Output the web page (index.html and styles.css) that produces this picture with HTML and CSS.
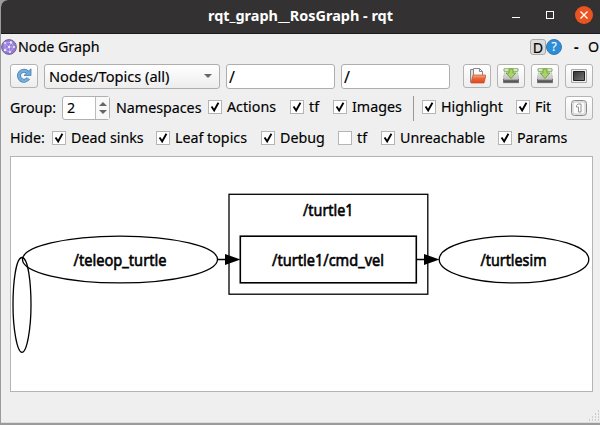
FILE: index.html
```html
<!DOCTYPE html>
<html lang="en">
<head>
<meta charset="utf-8">
<title>rqt_graph__RosGraph - rqt</title>
<link rel="stylesheet" href="styles.css">
</head>
<body>
<svg class="defs" width="0" height="0">
  <defs>
    <linearGradient id="folder" x2="0" y2="1"><stop stop-color="#f6ad86"/><stop offset=".45" stop-color="#e96534"/><stop offset="1" stop-color="#dd4a20"/></linearGradient>
    <linearGradient id="screen" x2="1" y2="1"><stop stop-color="#333"/><stop offset="1" stop-color="#777"/></linearGradient>
    <linearGradient id="drive" x2="0" y2="1"><stop stop-color="#eee"/><stop offset="1" stop-color="#aaa"/></linearGradient>
    <symbol id="save" viewBox="0 0 16 16">
      <path d="M2 3h12l2 8v4H0v-4z" fill="url(#drive)" stroke="#aaa" stroke-width=".5"/>
      <path d="M.3 11h15.4v3.7H.3z" fill="#555"/><path d="M1 11.2h14v1H1z" fill="#bbb"/>
      <path d="M1 .8h14v2.4H1z" fill="#fff" stroke="#79ad48"/>
      <path d="M6 1h4v4h3l-5 5.500-5-5.500h3z" fill="#add169" stroke="#6ca038" stroke-width=".9"/>
    </symbol>
  </defs>
</svg>
<div class="window">
  <header class="titlebar">
    <h1>rqt_graph__RosGraph - rqt</h1>
    <svg class="controls" width="84" height="24" viewBox="0 0 84 24">
      <path d="M1 14.500h8" stroke="#fff" fill="none"/><rect x="35.500" y="8.500" width="7" height="7" fill="none" stroke="#fff"/>
      <circle cx="73" cy="12" r="9" fill="#e95420"/><path d="M69.500 8.500l7 7m0-7l-7 7" stroke="#fff" stroke-width="1.300"/>
    </svg>
  </header>
  <div class="dock">
    <svg width="16" height="16" viewBox="0 0 16 16"><circle cx="8" cy="8" r="7.400" fill="#9578dc" stroke="#716985"/><path d="M4 4l6-1 3 5-4 5-5-2zM4 4l4 4 5 0M8 8l1 5M10 3L8 8l-4 3" fill="none" stroke="#c4b5f3" stroke-width=".8"/><g fill="#eee9ff"><circle cx="4" cy="4" r="1"/><circle cx="10" cy="3.500" r="1.200"/><circle cx="8" cy="8" r="1.200"/><circle cx="13" cy="8" r="1"/><circle cx="9" cy="13" r="1"/><circle cx="4" cy="11" r="1.200"/></g></svg>
    <span class="dock-title">Node Graph</span>
    <span class="dock-d">D</span>
    <span class="help">?</span>
    <span class="dash">-</span>
    <span class="o">O</span>
  </div>
  <div class="row tools">
    <button class="btn"><svg width="16" height="16" viewBox="0 0 16 16"><path d="M12.300 10.300a5 5 0 1 1-.7-6" fill="none" stroke="#4582b9" stroke-width="4"/><path d="M15 .8v6.700H8z" fill="#70a8d8" stroke="#4582b9" stroke-width=".8"/><path d="M12.300 10.300a5 5 0 1 1-.7-6" fill="none" stroke="#74acdc" stroke-width="2.500"/></svg></button>
    <div class="combo"><span>Nodes/Topics (all)</span><i></i></div>
    <div class="field"><span>/</span></div>
    <div class="field last"><span>/</span></div>
    <button class="btn"><svg width="17" height="16" viewBox="0 0 17 16"><path d="M1.500 14.500V1.500h8V14" fill="#ddd" stroke="#888"/><path d="M4.500 8V.5h6l3 3V8z" fill="#fafafa" stroke="#888"/><path d="M10.500.5v3h3" fill="none" stroke="#888"/><path d="M4 7h12.500v2L15 15H2z" fill="url(#folder)" stroke="#cb481f" stroke-width=".7"/></svg></button>
    <button class="btn"><svg width="16" height="16"><use href="#save"/></svg></button>
    <button class="btn"><svg width="16" height="16"><use href="#save"/></svg></button>
    <button class="btn"><svg width="16" height="16" viewBox="0 0 16 16"><path d="M.5 1.500h15v13H.5z" fill="#eee" stroke="#aaa"/><path d="M2.500 3.500h11v9h-11z" fill="url(#screen)" stroke="#222"/></svg></button>
  </div>
  <div class="row options">
    <span class="w-group">Group:</span>
    <div class="spin"><span>2</span><div class="steps"><i class="up"></i><i class="down"></i></div></div>
    <span class="w-names">Namespaces</span>
    <label class="check w-actions"><svg class="box on" viewBox="0 0 14 14"><path d="M3 6.500l3 4.500 5-9"/></svg><span>Actions</span></label>
    <label class="check w-tf"><svg class="box on" viewBox="0 0 14 14"><path d="M3 6.500l3 4.500 5-9"/></svg><span>tf</span></label>
    <label class="check w-images"><svg class="box on" viewBox="0 0 14 14"><path d="M3 6.500l3 4.500 5-9"/></svg><span>Images</span></label>
    <i class="divider"></i>
    <label class="check w-high"><svg class="box on" viewBox="0 0 14 14"><path d="M3 6.500l3 4.500 5-9"/></svg><span>Highlight</span></label>
    <label class="check w-fit"><svg class="box on" viewBox="0 0 14 14"><path d="M3 6.500l3 4.500 5-9"/></svg><span>Fit</span></label>
    <button class="btn"><svg width="16" height="16" viewBox="0 0 16 16"><rect x=".5" y=".5" width="15" height="15" rx="3" fill="#eee" stroke="#888"/><rect x="2" y="2" width="12" height="12" rx="2" fill="#fafafa" stroke="#ccc"/><path d="M5.500 5.500l1.500-1.500h3v8H7.500V7h-2z" fill="#fff" stroke="#888" stroke-width=".9"/></svg></button>
  </div>
  <div class="row hide">
    <span class="w-hide">Hide:</span>
    <label class="check w-dead"><svg class="box on" viewBox="0 0 14 14"><path d="M3 6.500l3 4.500 5-9"/></svg><span>Dead sinks</span></label>
    <label class="check w-leaf"><svg class="box on" viewBox="0 0 14 14"><path d="M3 6.500l3 4.500 5-9"/></svg><span>Leaf topics</span></label>
    <label class="check w-debug"><svg class="box on" viewBox="0 0 14 14"><path d="M3 6.500l3 4.500 5-9"/></svg><span>Debug</span></label>
    <label class="check w-tf"><svg class="box" viewBox="0 0 14 14"></svg><span>tf</span></label>
    <label class="check w-unreach"><svg class="box on" viewBox="0 0 14 14"><path d="M3 6.500l3 4.500 5-9"/></svg><span>Unreachable</span></label>
    <label class="check w-params"><svg class="box on" viewBox="0 0 14 14"><path d="M3 6.500l3 4.500 5-9"/></svg><span>Params</span></label>
  </div>
  <main class="canvas">
    <svg width="581" height="234" viewBox="11 157 581 234">
      <g fill="none" stroke="#000" stroke-width="1.300">
        <rect x="229" y="194.300" width="198.800" height="99.900"/>
        <rect x="240.300" y="236.200" width="176" height="46.600" stroke-width="1.600"/>
        <ellipse cx="120" cy="259.500" rx="97.500" ry="23.400"/>
        <ellipse cx="514" cy="259.500" rx="74.800" ry="23.400"/>
        <path d="M22 257.500C16 257.500 13 282 13 305s4 47.300 9 47.300 9-24.300 9-47.300-3-47.500-9-47.500z"/>
        <path d="M217.500 259.500h10M416.500 259.500h10"/>
      </g>
      <path d="M225 254l15.500 5.500-15.500 5.500zM424 254l15.500 5.500-15.500 5.500z"/>
      <g class="nodes">
        <text x="73.500" y="266" textLength="93" lengthAdjust="spacingAndGlyphs">/teleop_turtle</text>
        <text x="303" y="216" textLength="50.500" lengthAdjust="spacingAndGlyphs">/turtle1</text>
        <text x="272" y="266" textLength="112" lengthAdjust="spacingAndGlyphs">/turtle1/cmd_vel</text>
        <text x="480.500" y="266" textLength="66" lengthAdjust="spacingAndGlyphs">/turtlesim</text>
      </g>
    </svg>
  </main>
  <footer class="status"><svg width="12" height="12" viewBox="0 0 12 12"><path d="M10 1h1M7 4h1m2 0h1M4 7h1m2 0h1m2 0h1M1 10h1m2 0h1m2 0h1m2 0h1" stroke="#aaa"/></svg></footer>
</div>
</body>
</html>
```
FILE: styles.css
```css
* { box-sizing: border-box; }
body { margin: 0; width: 600px; height: 425px; overflow: hidden; background: #9b9b9b; font: 14.25px/20px "Noto Sans", sans-serif; color: #000; -webkit-text-stroke: .15px; }
.defs { position: absolute; }
.window { margin-left: 1px; width: 599px; height: 423px; display: flex; flex-direction: column; background: #efefef; border-radius: 7px 0 0 0; border-bottom: 1px solid #ddd; }
.titlebar { height: 34px; flex: none; display: flex; align-items: center; background: #333132; border-bottom: 1px solid #1e1a1c; border-radius: 7px 0 0 0; padding-left: 207px; }
.titlebar h1 { margin: 0; width: 303px; color: #fff; font-size: 14.45px; line-height: 20px; font-weight: 700; white-space: nowrap; padding-bottom: 1px; -webkit-text-stroke: 0; }
.controls { margin-top: -4px; }
.dock { height: 30px; flex: none; display: flex; align-items: center; padding-bottom: 4px; white-space: nowrap; }
.dock-title { width: 513px; padding-left: 1px; }
.dock-d { width: 16px; height: 16px; line-height: 15px; text-align: center; border: 1px solid #aaa; border-radius: 3px; background: #dcdcdc; flex: none; }
.help { width: 16px; height: 16px; flex: none; border-radius: 50%; border: 1px solid #3979a8; background: #2c8dd8; color: #fff; font-size: 12px; line-height: 14px; text-align: center; }
.dash { width: 26px; padding-left: 12px; flex: none; font-weight: 700; }
.o { flex: none; }
.row { display: flex; flex: none; align-items: center; padding-left: 9px; height: 25px; white-space: nowrap; }
.btn { width: 28px; height: 24px; flex: none; padding: 0; display: flex; align-items: center; justify-content: center; border: 1px solid #b4b4b4; border-radius: 3px; background: linear-gradient(#fff, #ededed); }
.tools { gap: 6px; }
.tools .btn { margin-bottom: 1px; }
.combo { width: 176px; height: 25px; flex: none; display: flex; align-items: center; justify-content: space-between; padding: 0 7px 1px 4px; border: 1px solid #aeaeae; border-radius: 3px; background: linear-gradient(#fff, #ededed); font-size: 14.6px; }
.combo i { border: 4px solid transparent; border-top-color: #666; border-bottom: 0; }
.field { width: 109px; height: 25px; flex: none; border: 1px solid #aeaeae; border-radius: 3px; background: #fff; padding: 2px; font-size: 16px; }
.last { margin-right: 7px; }
.options { margin-top: 7px; height: 24px; }
.spin { width: 48px; height: 24px; margin-right: 6px; flex: none; display: flex; border: 1px solid #b0b0b0; border-radius: 3px; background: #fff; line-height: 22px; padding-left: 4px; }
.spin span { width: 28px; }
.steps { flex: 1; display: flex; flex-direction: column; align-items: center; justify-content: center; gap: 4px; border-left: 1px solid #bbb; background: #f8f8f8; }
.steps i { border: 4px solid transparent; }
.up { border-bottom-color: #666 !important; border-top: 0 !important; }
.down { border-top-color: #666 !important; border-bottom: 0 !important; }
.check { display: flex; align-items: center; gap: 5px; flex: none; }
.box { width: 14px; height: 14px; flex: none; background: #fff; border: 1px solid #b5b5b5; }
.box path { fill: none; stroke: #000; stroke-width: 2.2; }
.options .check { padding-bottom: 2px; }
.divider { width: 9px; height: 25px; border-left: 1px solid #999; flex: none; }
.w-group { width: 52px; }
.w-names { width: 92px; }
.w-actions { width: 82px; }
.w-tf { width: 43px; }
.w-images { width: 80px; }
.w-high { width: 94px; }
.w-fit { width: 49px; }
.hide { margin-top: 5px; height: 25px; }
.w-hide { width: 42px; }
.w-dead { width: 104px; }
.w-leaf { width: 105px; }
.w-debug { width: 77px; }
.w-unreach { width: 117px; }
.canvas { margin: 6px 0 0 9px; width: 583px; height: 236px; flex: none; background: #fff; border: 1px solid #b4b4b4; }
.canvas svg { display: block; }
.nodes { font-family: "Noto Sans", sans-serif; font-size: 16px; stroke: #000; stroke-width: .6px; }
.status { flex: 1; display: flex; justify-content: flex-end; align-items: flex-end; }
```
